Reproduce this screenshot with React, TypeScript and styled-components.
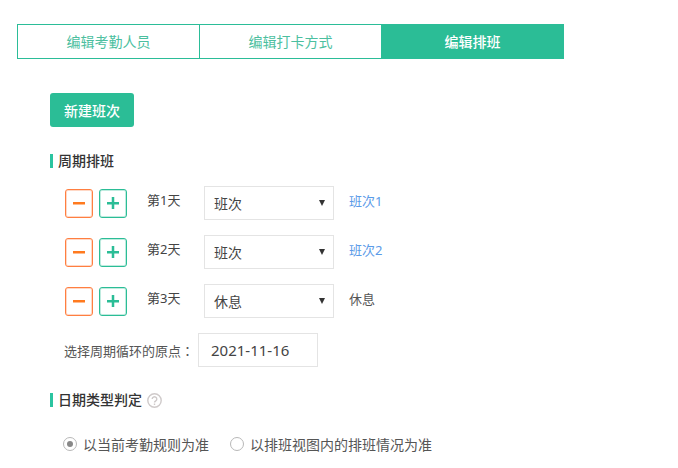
import React from "react";
import styled, { createGlobalStyle } from "styled-components";

const Global = createGlobalStyle`
  html, body { margin: 0; padding: 0; background: #fff; height: 468px; overflow: hidden; }
  body { font-family: "Noto Sans", "Noto Sans CJK SC", sans-serif; font-size: 14px; color: #333; }
`;

const Page = styled.div`
  padding: 24px 0 0 17px;
  height: 444px;
  overflow: hidden;
`;

const Tabs = styled.div`
  display: flex;
  width: 547px;
  height: 35px;
`;

const Tab = styled.div<{ $active?: boolean }>`
  flex: 1;
  box-sizing: border-box;
  display: flex;
  align-items: center;
  justify-content: center;
  font-size: 14px;
  line-height: 1;
  border: 1px solid #2bbd98;
  margin-left: -1px;
  &:first-child { margin-left: 0; }
  background: ${(p) => (p.$active ? "#2bbd96" : "#fff")};
  color: ${(p) => (p.$active ? "#fff" : "#4cbf9f")};
  font-weight: ${(p) => (p.$active ? 500 : 400)};
`;

const Content = styled.div`
  padding: 34px 0 0 33px;
  display: flex;
  flex-direction: column;
  align-items: flex-start;
`;

const PrimaryButton = styled.button`
  width: 84px;
  height: 34px;
  padding: 0;
  border: 0;
  border-radius: 3px;
  background: #2bbd96;
  color: #fff;
  font: inherit;
  font-size: 14px;
  font-weight: 500;
`;

const SectionTitle = styled.h3`
  margin: 0;
  height: 14px;
  display: flex;
  align-items: center;
  gap: 5px;
  font-size: 14px;
  font-weight: 500;
  color: #333;
  line-height: 14px;
  &::before {
    content: "";
    width: 3px;
    height: 14px;
    background: #2bc4a0;
  }
`;

const CycleTitle = styled(SectionTitle)`
  margin-top: 27px;
`;

const DateTypeTitle = styled(SectionTitle)`
  margin-top: 26px;
`;

const Rows = styled.div`
  margin-top: 18px;
  padding-left: 15px;
  display: flex;
  flex-direction: column;
  gap: 15px;
`;

const Row = styled.div`
  display: flex;
  align-items: center;
  height: 34px;
`;

const StepButton = styled.button<{ $tone: "minus" | "plus" }>`
  box-sizing: border-box;
  width: 28px;
  height: 29px;
  padding: 0;
  margin-right: 6px;
  background: #fff;
  border: 1px solid ${(p) => (p.$tone === "minus" ? "#ff7f41" : "#2bbd96")};
  box-shadow: inset 0 0 0 1px ${(p) => (p.$tone === "minus" ? "rgba(255,127,65,.3)" : "rgba(43,189,150,.3)")};
  border-radius: 3px;
  color: ${(p) => (p.$tone === "minus" ? "#ff7a1f" : "#2bbd96")};
  display: flex;
  align-items: center;
  justify-content: center;
`;

const DayLabel = styled.span`
  width: 57px;
  margin-left: 14px;
  font-size: 13px;
  color: #444;
  position: relative;
  top: -4px;
`;

const SelectBox = styled.div`
  box-sizing: border-box;
  width: 130px;
  height: 34px;
  border: 1px solid #e4e4e4;
  padding: 0 8px 0 9px;
  display: flex;
  align-items: center;
  justify-content: space-between;
  font-size: 14px;
  color: #444;
`;

const Caret = styled.span`
  width: 0;
  height: 0;
  border-left: 3px solid transparent;
  border-right: 3px solid transparent;
  border-top: 6px solid #333;
  margin-top: -1px;
`;

const Note = styled.span<{ $link?: boolean }>`
  margin-left: 15px;
  font-size: 13px;
  position: relative;
  top: -3px;
  color: ${(p) => (p.$link ? "#5b9be8" : "#555")};
`;

const OriginRow = styled.div`
  margin-top: 15px;
  padding-left: 14px;
  display: flex;
  align-items: center;
  font-size: 13px;
  color: #555;
`;

const OriginLabel = styled.span`
  width: 134px;
`;

const OriginColon = styled.span`
  font-family: "Noto Sans CJK TC", sans-serif;
`;

const DateInput = styled.div`
  box-sizing: border-box;
  width: 120px;
  height: 34px;
  border: 1px solid #e4e4e4;
  padding-left: 12px;
  display: flex;
  align-items: center;
  font-size: 15px;
  color: #444;
`;

const RadioRow = styled.div`
  margin-top: 27px;
  padding-left: 13px;
  display: flex;
  align-items: center;
  font-size: 14px;
  color: #555;
`;

const RadioItem = styled.label`
  display: flex;
  align-items: center;
  gap: 6px;
  margin-right: 21px;
`;

const RadioDot = styled.span<{ $on?: boolean }>`
  box-sizing: border-box;
  width: 14px;
  height: 14px;
  border-radius: 50%;
  border: 1px solid #b8b8b8;
  background: #fff;
  display: flex;
  align-items: center;
  justify-content: center;
  &::after {
    content: "";
    width: 6px;
    height: 6px;
    border-radius: 50%;
    background: ${(p) => (p.$on ? "#888" : "transparent")};
  }
`;

const rows = [
  { day: "第1天", value: "班次", note: "班次1", link: true },
  { day: "第2天", value: "班次", note: "班次2", link: true },
  { day: "第3天", value: "休息", note: "休息", link: false },
];

export default function App() {
  return (
    <Page>
      <Global />
      <Tabs>
        <Tab>编辑考勤人员</Tab>
        <Tab>编辑打卡方式</Tab>
        <Tab $active>编辑排班</Tab>
      </Tabs>
      <Content>
        <PrimaryButton>新建班次</PrimaryButton>
        <CycleTitle>周期排班</CycleTitle>
        <Rows>
          {rows.map((r) => (
            <Row key={r.day}>
              <StepButton $tone="minus">
                <svg width="12" height="12" viewBox="0 0 12 12">
                  <rect x="0" y="5" width="12" height="2.500" fill="currentColor" />
                </svg>
              </StepButton>
              <StepButton $tone="plus">
                <svg width="12" height="12" viewBox="0 0 12 12">
                  <path d="M0 5h4.750V0h2.500v5H12v2.500H7.250V12h-2.500V7.500H0z" fill="currentColor" />
                </svg>
              </StepButton>
              <DayLabel>{r.day}</DayLabel>
              <SelectBox>
                {r.value}
                <Caret />
              </SelectBox>
              <Note $link={r.link}>{r.note}</Note>
            </Row>
          ))}
        </Rows>
        <OriginRow>
          <OriginLabel>选择周期循环的原点<OriginColon>：</OriginColon></OriginLabel>
          <DateInput>2021-11-16</DateInput>
        </OriginRow>
        <DateTypeTitle>
          日期类型判定
          <svg width="15" height="15" viewBox="0 0 15 15">
            <circle cx="7.5" cy="7.5" r="6.7" fill="none" stroke="#cfcaca" strokeWidth="1.4" />
            <path d="M5.2 6a2.300 2.300 0 1 1 3.500 2c-.8.4-1.200.8-1.200 1.600" fill="none" stroke="#cfcaca" strokeWidth="1.4" />
            <rect x="6.800" y="10.500" width="1.400" height="1.500" fill="#cfcaca" />
          </svg>
        </DateTypeTitle>
        <RadioRow>
          <RadioItem>
            <RadioDot $on />
            以当前考勤规则为准
          </RadioItem>
          <RadioItem>
            <RadioDot />
            以排班视图内的排班情况为准
          </RadioItem>
        </RadioRow>
      </Content>
    </Page>
  );
}
